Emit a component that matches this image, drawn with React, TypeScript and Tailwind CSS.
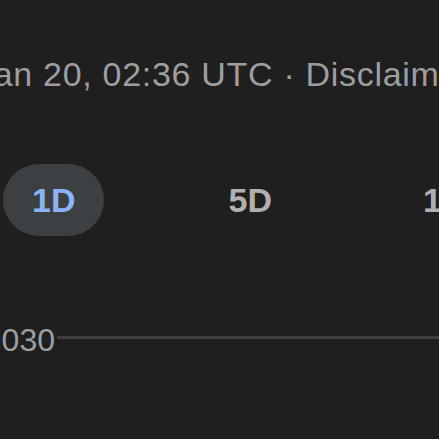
import React from 'react';

const tabs = ['1D', '5D', '1M', '6M', 'YTD'];

export default function App() {
  return (
    <div
      className="w-[439px] h-[439px] overflow-hidden bg-[#1f1f1f] flex flex-col"
      style={{ fontFamily: '"Liberation Sans", Arial, sans-serif' }}
    >
      {/* Timestamp */}
      <div className="pt-[54px] ml-[-24px] whitespace-nowrap text-[34px] leading-[40px] tracking-[0.7px] text-[#9e9e9e]">
        Jan 20, 02:36 UTC · Disclaimer
      </div>

      {/* Range tabs */}
      <div className="mt-[70px] ml-[3px] flex items-center whitespace-nowrap">
        <div className="h-[72px] px-[29px] flex items-center rounded-full bg-[#3c4043] text-[#8ab4f8] text-[34px] leading-none font-bold">
          {tabs[0]}
        </div>
        {tabs.slice(1).map((t, i) => (
          <div
            key={t}
            className={
              i === 0
                ? 'ml-[95px] h-[72px] px-[29px] flex items-center rounded-full text-[#b0b0b0] text-[34px] leading-none font-bold'
                : 'ml-[93px] h-[72px] px-[29px] flex items-center rounded-full text-[#b0b0b0] text-[34px] leading-none font-bold'
            }
          >
            {t}
          </div>
        ))}
      </div>

      {/* Chart baseline */}
      <div className="mt-[88px] flex items-start">
        <div className="w-[55px] shrink-0 flex justify-end overflow-visible">
          <span className="whitespace-nowrap text-[32px] leading-[32px] text-[#9e9e9e]">1,030</span>
        </div>
        <div className="ml-[2px] mt-[12px] h-[3px] flex-1 bg-[#3c4043]" />
      </div>
    </div>
  );
}
